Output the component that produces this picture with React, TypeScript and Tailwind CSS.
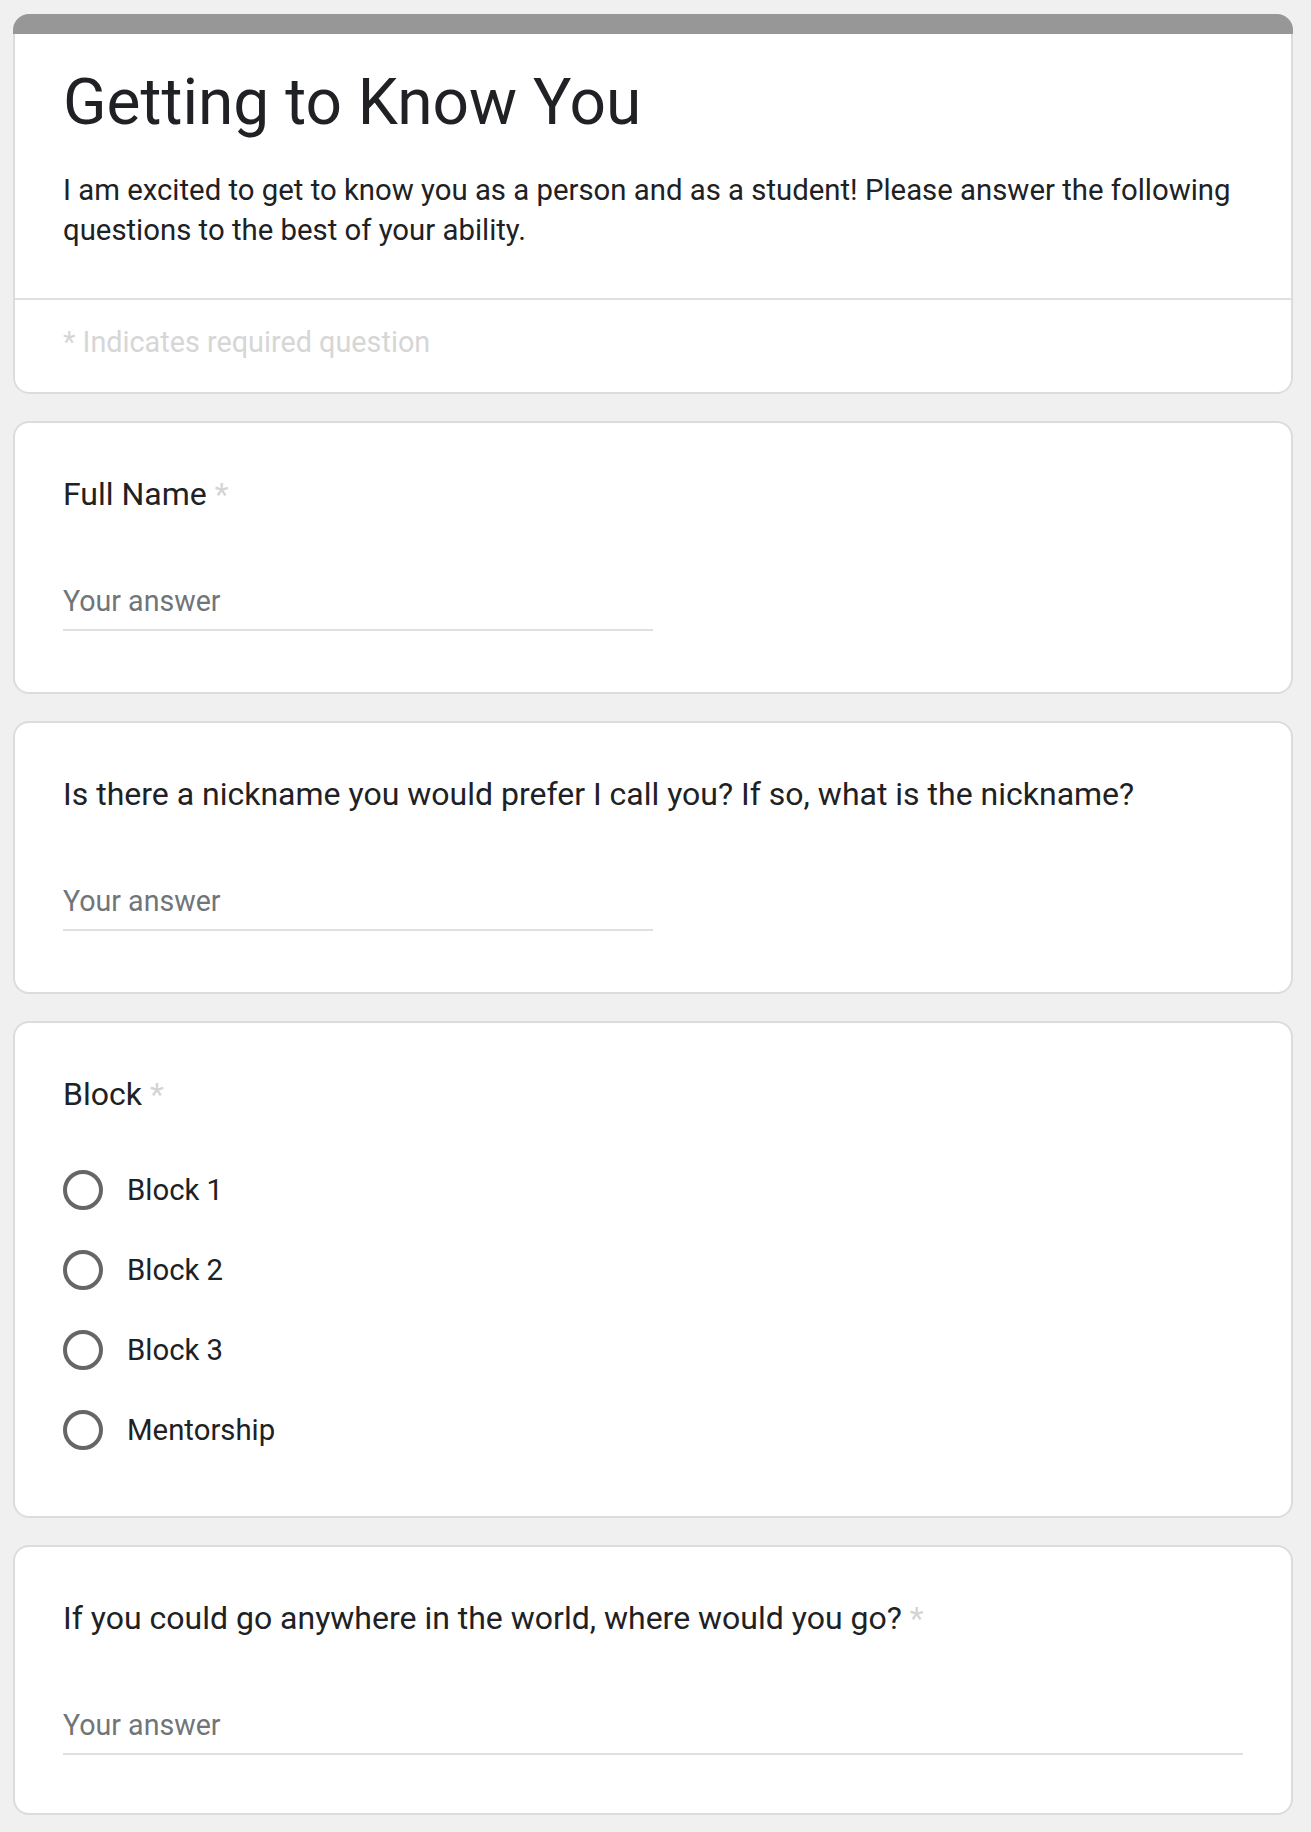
// App.tsx — static recreation of a Google Forms style "Getting to Know You" form (2x scale).
const font = { fontFamily: "Roboto, 'Noto Sans', Arial, sans-serif" };

type Question =
  | { id: string; kind: "short"; title: string; required?: boolean; wide?: boolean }
  | { id: string; kind: "radio"; title: string; required?: boolean; options: string[] };

const questions: Question[] = [
  { id: "name", kind: "short", title: "Full Name", required: true },
  {
    id: "nickname",
    kind: "short",
    title: "Is there a nickname you would prefer I call you? If so, what is the nickname?",
  },
  {
    id: "block",
    kind: "radio",
    title: "Block",
    required: true,
    options: ["Block 1", "Block 2", "Block 3", "Mentorship"],
  },
  {
    id: "anywhere",
    kind: "short",
    title: "If you could go anywhere in the world, where would you go?",
    required: true,
    wide: true,
  },
];

function QuestionTitle({ title, required }: { title: string; required?: boolean }) {
  return (
    <div className="text-[32px] leading-[48px] text-[#202124]">
      {title}
      {required && <span className="pl-[8px] text-[#d4d4d4]">*</span>}
    </div>
  );
}

function QuestionCard({ q }: { q: Question }) {
  return (
    <div className="rounded-[16px] border-2 border-[#dadce0] bg-white px-[48px] pt-[47px]">
      <QuestionTitle title={q.title} required={q.required} />
      {q.kind === "short" ? (
        <div className={`${q.wide ? "pb-[58px]" : "pb-[61px]"} pt-[63px]`}>
          <div
            className={`${q.wide ? "w-full" : "w-1/2"} border-b-2 border-[#e0e0e0] pb-[8px] text-[28.6px] leading-[40px] text-[#70757a]`}
          >
            Your answer
          </div>
        </div>
      ) : (
        <div className="pb-[46px] pt-[32px]">
          {q.options.map((opt) => (
            <label key={opt} className="flex h-[80px] items-center">
              <span className="h-[40px] w-[40px] shrink-0 rounded-full border-[4px] border-[#666666]" />
              <span className="ml-[24px] text-[29.33px] leading-[40px] text-[#202124]">{opt}</span>
            </label>
          ))}
        </div>
      )}
    </div>
  );
}

export default function App() {
  return (
    <div className="min-h-screen bg-[#f0f0f0] pb-[14px] pl-[13px] pt-[14px]" style={font}>
      <div className="flex w-[1280px] flex-col gap-[27px]">
        <div className="overflow-hidden rounded-[16px]">
          <div className="h-[20px] bg-[#979797]" />
          <div className="rounded-b-[16px] border-2 border-t-0 border-[#dadce0] bg-white">
            <div className="border-b-2 border-[#e0e0e0] px-[48px] pb-[48px] pt-[29px]">
              <h1 className="text-[64px] leading-[80px] text-[#202124]">Getting to Know You</h1>
              <p className="mt-[27px] text-[29.33px] leading-[40px] text-[#202124]">
                I am excited to get to know you as a person and as a student! Please answer the following
                questions to the best of your ability.
              </p>
            </div>
            <div className="px-[48px] pb-[30px] pt-[22px] text-[28.8px] leading-[40px] text-[#d6d6d6]">
              * Indicates required question
            </div>
          </div>
        </div>
        {questions.map((q) => (
          <QuestionCard key={q.id} q={q} />
        ))}
      </div>
    </div>
  );
}
